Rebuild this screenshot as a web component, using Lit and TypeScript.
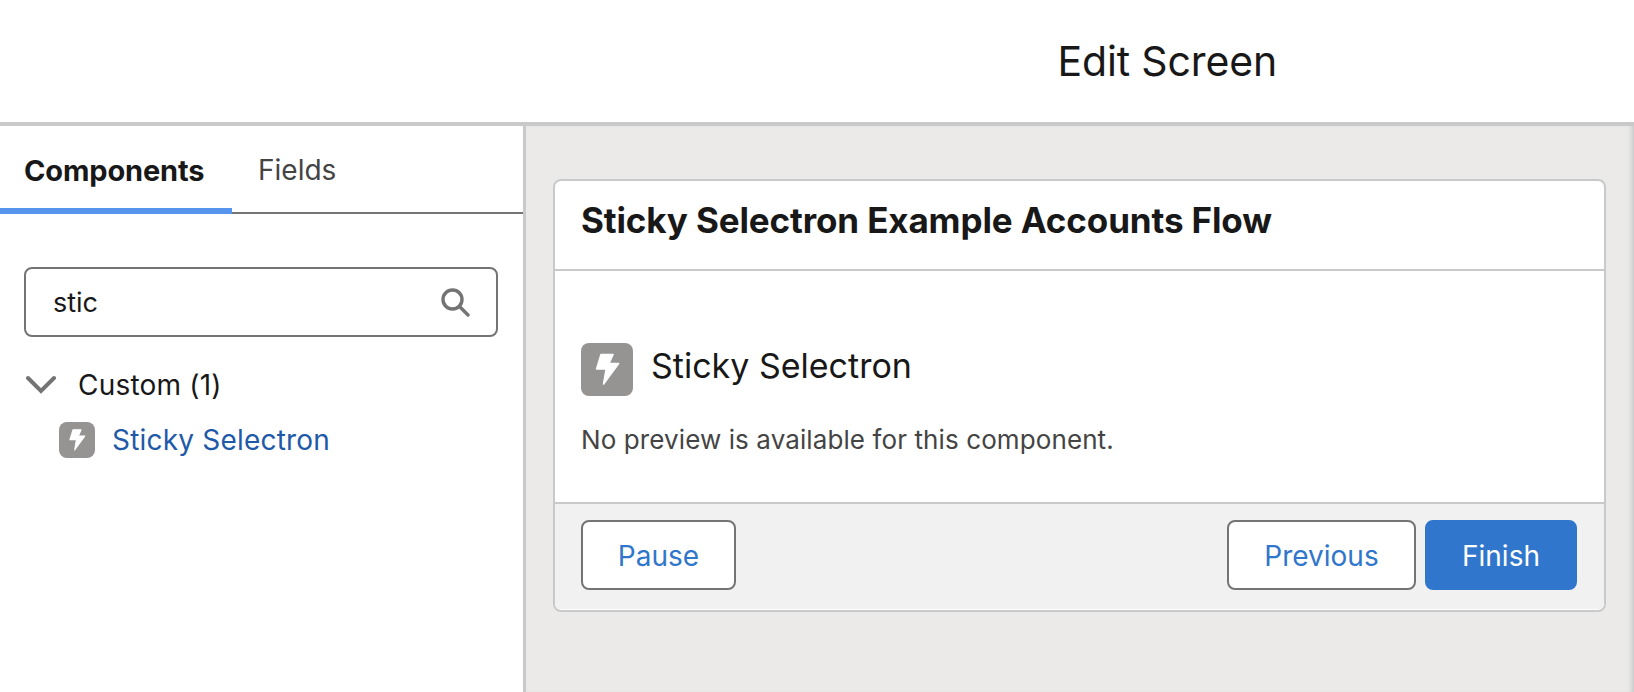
import { LitElement, html, css } from "lit";
import { customElement } from "lit/decorators.js";

const bolt = html`<svg viewBox="0 0 52 53" class="bolt"><path fill="#fff" stroke="#fff" stroke-width="1.6" stroke-linejoin="round" d="M20 11.5 L32 11.5 L28 20.5 L37.6 20.5 L22.6 41 L25.2 26 L15.6 26 Z"/></svg>`;

@customElement("app-root")
export class AppRoot extends LitElement {
  static styles = css`
    :host { display: block; width: 1634px; height: 692px; overflow: hidden; background: #fff; font-family: Inter, "Liberation Sans", sans-serif; color: #181818; }
    * { box-sizing: border-box; }
    .top { height: 126px; border-bottom: 4px solid #c9c9c9; display: flex; justify-content: flex-end; padding: 36px 357px 0 0; }
    .top h1 { margin: 0; font-size: 41px; line-height: 50px; font-weight: 400; letter-spacing: -0.15px; }
    .main { display: flex; height: 566px; }
    .side { width: 526px; flex: none; border-right: 3px solid #c9c9c9; background: #fff; }
    .tabs { display: flex; height: 88px; border-bottom: 2px solid #747474; }
    .tab { height: 88px; display: flex; align-items: center; }
    .tab.on { width: 232px; padding-left: 24px; font-size: 29px; letter-spacing: -0.15px; font-weight: 700; border-bottom: 6px solid #5595ee; padding-top: 6px; }
    .tab.off { margin-left: 26px; color: #444; font-size: 28px; padding-top: 6px; padding-bottom: 6px; }
    .search { margin: 53px 0 0 24px; width: 474px; height: 70px; border: 2px solid #747474; border-radius: 8px; display: flex; align-items: center; justify-content: space-between; padding: 0 26px 0 27px; font-size: 27px; }
    .search svg { width: 30px; height: 30px; }
    .group { margin: 31px 0 0 26px; display: flex; align-items: center; gap: 22px; font-size: 28px; line-height: 34px; letter-spacing: 0.2px; }
    .group svg { width: 30px; height: 20px; }
    .item { margin: 20px 0 0 59px; display: flex; align-items: center; gap: 17px; font-size: 28px; line-height: 36px; letter-spacing: 0.2px; color: #1f5aa8; }
    .ic { background: #969492; display: block; flex: none; }
    .ic svg { display: block; width: 100%; height: 100%; }
    .ic.s { width: 36px; height: 36px; border-radius: 8px; }
    .ic.l { width: 52px; height: 53px; border-radius: 8px; }
    .canvas { flex: 1; background: #ebeae9; padding: 53px 0 0 27px; box-shadow: inset -5px 0 5px -3px #c4c4c4; }
    .card { width: 1053px; height: 433px; background: #fff; border: 2px solid #c9c9c9; border-radius: 8px; overflow: hidden; display: flex; flex-direction: column; }
    .head { height: 90px; flex: none; border-bottom: 2px solid #c9c9c9; padding: 0 0 10px 26px; display: flex; align-items: center; font-size: 35px; font-weight: 700; letter-spacing: -0.12px; }
    .body { flex: 1; padding: 72px 0 0 26px; }
    .cmp { display: flex; align-items: center; gap: 18px; font-size: 34px; }
    .cmp span:last-child { position: relative; top: -4px; }
    .note { margin: 28px 0 0; font-size: 26px; line-height: 32px; letter-spacing: 0.1px; color: #444; }
    .foot { height: 107px; flex: none; margin-bottom: 1px; background: #f1f1f1; border-top: 2px solid #c9c9c9; padding: 16px 27px 0 26px; display: flex; justify-content: space-between; align-items: flex-start; }
    .btns { display: flex; gap: 9px; }
    .btn { height: 70px; border: 2px solid #747474; border-radius: 8px; background: #fff; color: #2f76cc; font-size: 28px; padding-top: 2px; display: flex; align-items: center; justify-content: center; }
    .btn.pause { width: 155px; }
    .btn.prev { width: 189px; }
    .btn.fin { width: 152px; background: #3076cc; border-color: #3076cc; color: #fff; }
  `;
  render() {
    return html`
      <div class="top"><h1>Edit Screen</h1></div>
      <div class="main">
        <div class="side">
          <div class="tabs"><div class="tab on">Components</div><div class="tab off">Fields</div></div>
          <div class="search"><span>stic</span>
            <svg viewBox="0 0 30 30" fill="none" stroke="#747474" stroke-width="3.4"><circle cx="12.5" cy="12.5" r="9.5"/><path d="M19.5 19.5 L28 28" stroke-linecap="round"/></svg>
          </div>
          <div class="group">
            <svg viewBox="0 0 30 20" fill="none" stroke="#747474" stroke-width="4"><path d="M2 3 L15 16 L28 3" stroke-linecap="round"/></svg>
            <span>Custom (1)</span>
          </div>
          <div class="item"><span class="ic s">${bolt}</span><span>Sticky Selectron</span></div>
        </div>
        <div class="canvas">
          <div class="card">
            <div class="head">Sticky Selectron Example Accounts Flow</div>
            <div class="body">
              <div class="cmp"><span class="ic l">${bolt}</span><span>Sticky Selectron</span></div>
              <p class="note">No preview is available for this component.</p>
            </div>
            <div class="foot">
              <div class="btn pause">Pause</div>
              <div class="btns"><div class="btn prev">Previous</div><div class="btn fin">Finish</div></div>
            </div>
          </div>
        </div>
      </div>
    `;
  }
}
